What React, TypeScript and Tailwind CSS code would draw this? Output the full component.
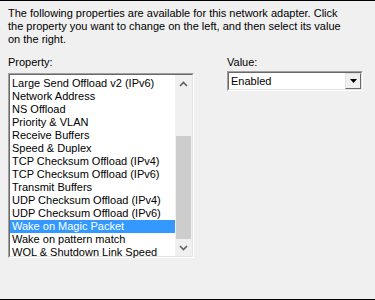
import React from "react";

const items = [
  "Large Send Offload v2 (IPv6)",
  "Network Address",
  "NS Offload",
  "Priority & VLAN",
  "Receive Buffers",
  "Speed & Duplex",
  "TCP Checksum Offload (IPv4)",
  "TCP Checksum Offload (IPv6)",
  "Transmit Buffers",
  "UDP Checksum Offload (IPv4)",
  "UDP Checksum Offload (IPv6)",
  "Wake on Magic Packet",
  "Wake on pattern match",
  "WOL & Shutdown Link Speed",
];

export default function App() {
  return (
    <div
      className="w-[375px] h-[300px] bg-[#f0f0f0] text-[11px] leading-[13px] text-black flex flex-col border-t border-b border-black overflow-hidden"
      style={{ fontFamily: '"Liberation Sans", Arial, sans-serif' }}
    >
      <div className="pl-[8px] pt-[6px] w-[352px]">
        The following properties are available for this network adapter. Click
        the property you want to change on the left, and then select its value
        on the right.
      </div>
      <div className="flex pl-[8px] mt-[10px]">
        <div className="flex flex-col w-[186px]">
          <div className="h-[13px]">Property:</div>
          <div className="mt-[4px] h-[185px] border border-t-[#a0a0a0] border-l-[#a0a0a0] border-r-white border-b-white">
            <div className="h-full border border-t-[#696969] border-l-[#696969] border-r-[#e3e3e3] border-b-[#e3e3e3] bg-white flex">
              <div className="flex-1 flex flex-col pt-[2px]">
                {items.map((it, i) => (
                  <div
                    key={it}
                    className={
                      "h-[13px] pl-[2px] whitespace-nowrap " +
                      (i === 11 ? "bg-[#3399ff] text-white" : "")
                    }
                  >
                    {it}
                  </div>
                ))}
              </div>
              <div className="w-[17px] bg-[#f0f0f0] flex flex-col">
                <div className="h-[17px] flex items-center justify-center">
                  <svg width="9" height="6" viewBox="0 0 9 6">
                    <path d="M1 5 L4.5 1.5 L8 5" stroke="#606060" strokeWidth="1.6" fill="none" />
                  </svg>
                </div>
                <div className="flex-1 flex flex-col px-[1px]">
                  <div className="h-[44px]" />
                  <div className="flex-1 bg-[#cdcdcd]" />
                </div>
                <div className="h-[17px] flex items-center justify-center">
                  <svg width="9" height="6" viewBox="0 0 9 6">
                    <path d="M1 1 L4.5 4.5 L8 1" stroke="#606060" strokeWidth="1.6" fill="none" />
                  </svg>
                </div>
              </div>
            </div>
          </div>
        </div>
        <div className="flex flex-col ml-[33px]">
          <div className="h-[13px]">Value:</div>
          <div className="mt-[2px] w-[136px] h-[20px] border border-t-[#a0a0a0] border-l-[#a0a0a0] border-r-white border-b-white">
            <div className="h-full border border-t-[#696969] border-l-[#696969] border-r-[#e3e3e3] border-b-[#e3e3e3] bg-white flex items-center">
              <div className="flex-1 pl-[2px]">Enabled</div>
              <div className="w-[16px] h-[16px] bg-[#f0f0f0] border border-t-[#e3e3e3] border-l-[#e3e3e3] border-r-[#696969] border-b-[#696969] flex items-center justify-center">
                <svg width="7" height="4" viewBox="0 0 7 4">
                  <path d="M0 0 H7 L3.5 4 Z" fill="#000" />
                </svg>
              </div>
            </div>
          </div>
        </div>
      </div>
    </div>
  );
}
